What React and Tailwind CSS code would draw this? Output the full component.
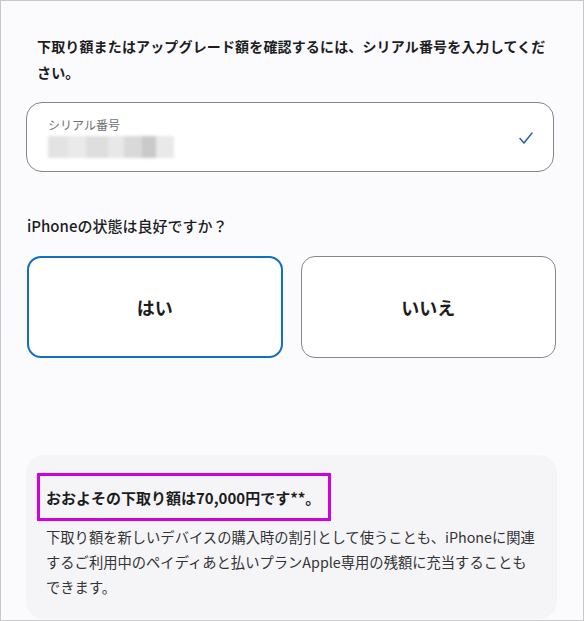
export default function App() {
  const font = { fontFamily: '"Noto Sans CJK JP", "Noto Sans", sans-serif' };
  return (
    <div
      className="w-[584px] h-[621px] overflow-hidden border border-[#c8c8c8] bg-[#fbfbfd] text-[#1d1d1f]"
      style={font}
    >
      <div className="pl-[36px] pt-[32px]">
        <p className="text-[14px] leading-[26px] font-bold tracking-[0.15px]">
          下取り額またはアップグレード額を確認するには、シリアル番号を入力してくだ
          <br />
          さい。
        </p>
      </div>

      <div className="mt-[17px] ml-[25px] w-[528px] h-[70px] rounded-[16px] border border-[#86868b] bg-white flex items-center justify-between pl-[21px] pr-[19px]">
        <div className="flex flex-col">
          <span className="text-[12px] leading-[16px] text-[#6e6e73]">シリアル番号</span>
          <div className="mt-[3px] flex h-[22px] w-[126px] blur-[1.5px]">
            <div className="w-[20px] bg-[#e3e3e3]" />
            <div className="w-[18px] bg-[#eaeaea]" />
            <div className="w-[22px] bg-[#dedede]" />
            <div className="w-[16px] bg-[#e8e8e8]" />
            <div className="w-[18px] bg-[#d9d9d9]" />
            <div className="w-[14px] bg-[#c9c9c9]" />
            <div className="w-[18px] bg-[#e9e9e9]" />
          </div>
        </div>
        <svg width="16" height="14" viewBox="0 0 16 14" fill="none" className="mt-[2px]">
          <path d="M2 7.5 L6 12 L14 2" stroke="#2a6aa8" strokeWidth="1.6" strokeLinecap="round" strokeLinejoin="round" />
        </svg>
      </div>

      <p className="mt-[42px] ml-[26px] text-[15px] leading-[24px] font-medium">iPhoneの状態は良好ですか？</p>

      <div className="mt-[18px] ml-[26px] w-[529px] grid grid-cols-2 gap-[18px]">
        <button className="h-[102px] rounded-[14px] border-2 border-[#0f6fc0] bg-white text-[18px] font-bold">
          はい
        </button>
        <button className="h-[102px] rounded-[14px] border border-[#86868b] bg-white text-[18px] font-bold">
          いいえ
        </button>
      </div>

      <div className="mt-[97px] ml-[25px] w-[531px] h-[164px] rounded-[18px] bg-[#f5f5f7] pt-[18px] pl-[11px]">
        <div className="inline-block border-[3px] border-[#d000df] pl-[6px] pr-[8px] h-[48px] leading-[42px]">
          <span className="text-[15px] font-bold">おおよその下取り額は70,000円です**。</span>
        </div>
        <p className="pl-[9px] mt-[3px] text-[14.3px] leading-[25px] text-[#333336]">
          下取り額を新しいデバイスの購入時の割引として使うことも、iPhoneに関連
          <br />
          するご利用中のペイディあと払いプランApple専用の残額に充当することも
          <br />
          できます。
        </p>
      </div>
    </div>
  );
}
